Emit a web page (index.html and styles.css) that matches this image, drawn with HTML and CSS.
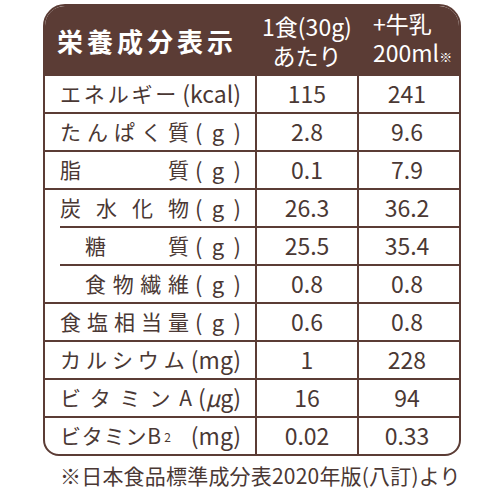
FILE: index.html
```html
<!DOCTYPE html>
<html lang="ja">
<head>
    <meta charset="utf-8">
    <title>栄養成分表示</title>
    <link rel="stylesheet" href="styles.css">
</head>
<body>
    <div class="hyou">
        <div class="satir baslik">
            <div class="ad-hucre baslik-ad">栄養成分表示</div>
            <div class="sayi"><span class="st">1食(30g)</span><span class="st">あたり</span></div>
            <div class="sayi"><span class="st">+牛乳</span><span class="st">200ml<span class="kucuk">※</span></span></div>
        </div>

        <div class="satir">
            <div class="ad-hucre"><span class="ad"><i>エ</i><i>ネ</i><i>ル</i><i>ギ</i><i>ー</i></span><span class="birim">(kcal)</span></div>
            <div class="sayi">115</div>
            <div class="sayi">241</div>
        </div>
        <div class="satir">
            <div class="ad-hucre"><span class="ad"><i>た</i><i>ん</i><i>ぱ</i><i>く</i><i>質</i></span><span class="birim g"><i>(</i><i>g</i><i>)</i></span></div>
            <div class="sayi">2.8</div>
            <div class="sayi">9.6</div>
        </div>
        <div class="satir">
            <div class="ad-hucre"><span class="ad"><i>脂</i><i>質</i></span><span class="birim g"><i>(</i><i>g</i><i>)</i></span></div>
            <div class="sayi">0.1</div>
            <div class="sayi">7.9</div>
        </div>
        <div class="satir">
            <div class="ad-hucre"><span class="ad"><i>炭</i><i>水</i><i>化</i><i>物</i></span><span class="birim g"><i>(</i><i>g</i><i>)</i></span></div>
            <div class="sayi">26.3</div>
            <div class="sayi">36.2</div>
        </div>
        <div class="satir alt">
            <div class="ad-hucre"><span class="ad"><i>糖</i><i>質</i></span><span class="birim g"><i>(</i><i>g</i><i>)</i></span></div>
            <div class="sayi">25.5</div>
            <div class="sayi">35.4</div>
        </div>
        <div class="satir alt">
            <div class="ad-hucre"><span class="ad"><i>食</i><i>物</i><i>繊</i><i>維</i></span><span class="birim g"><i>(</i><i>g</i><i>)</i></span></div>
            <div class="sayi">0.8</div>
            <div class="sayi">0.8</div>
        </div>
        <div class="satir">
            <div class="ad-hucre"><span class="ad"><i>食</i><i>塩</i><i>相</i><i>当</i><i>量</i></span><span class="birim g"><i>(</i><i>g</i><i>)</i></span></div>
            <div class="sayi">0.6</div>
            <div class="sayi">0.8</div>
        </div>
        <div class="satir">
            <div class="ad-hucre"><span class="ad"><i>カ</i><i>ル</i><i>シ</i><i>ウ</i><i>ム</i></span><span class="birim">(mg)</span></div>
            <div class="sayi">1</div>
            <div class="sayi">228</div>
        </div>
        <div class="satir">
            <div class="ad-hucre"><span class="ad"><i>ビ</i><i>タ</i><i>ミ</i><i>ン</i><i>A</i></span><span class="birim">(<em>μ</em>g)</span></div>
            <div class="sayi">16</div>
            <div class="sayi">94</div>
        </div>
        <div class="satir">
            <div class="ad-hucre"><span class="ad"><i>ビ</i><i>タ</i><i>ミ</i><i>ン</i><i>B<small>2</small></i></span><span class="birim b2">(mg)</span></div>
            <div class="sayi">0.02</div>
            <div class="sayi">0.33</div>
        </div>
    </div>
    <p class="not">※日本食品標準成分表2020年版(八訂)より</p>
</body>
</html>
```

FILE: styles.css
```css
body {margin: 0; background-color: #fff; color: #4a3834; font-family: "Noto Sans CJK JP", "Noto Sans", sans-serif;}

.hyou {
    margin: 4px 0 0 43px;
    width: 414px;
    border: 2px solid #5b3c35;
    border-radius: 22px 22px 16px 16px;
    overflow: hidden;}
.satir {
    box-sizing: border-box;
    display: flex;
    height: 38px;
    border-top: 2px solid #5b3c35;
    font-size: 21px;
    line-height: 35px;}
.satir > div {box-sizing: border-box;}
.ad-hucre {
    width: 210px;
    display: flex;
    padding: 0 14px 0 15px;}
.sayi {
    width: 102px;
    border-left: 2px solid #5b3c35;
    text-align: center;
    font-size: 23px;}
.sayi:last-child {width: 98px;}

.baslik {
    height: 68px;
    border-top: none;
    background-color: #5b3c35;
    color: #fff;}
.baslik .sayi {
    border-left-color: #5b3c35;
    display: flex;
    flex-direction: column;
    justify-content: center;
    gap: 1px;
    font-size: 23px;
    line-height: 28px;
    white-space: nowrap;}
.baslik .sayi:first-of-type {padding-right: 4px;}
.baslik .sayi:last-child {text-align: left; padding-left: 14px;}
.baslik-ad {font-size: 26px; font-weight: bold; letter-spacing: 4px; align-items: center; padding-left: 12px;}
.kucuk {font-size: 13px;}

.ad {flex: 1; display: flex; justify-content: space-between;}
.ad i, .birim i {font-style: normal;}
.ad small {font-size: 12px; vertical-align: 2px; margin-left: 3px;}
.birim {margin-left: 6px; font-size: 23px;}
.birim em {font-style: italic;}
.birim.b2 {margin-left: 20px;}
.birim.g {display: flex; justify-content: space-between; width: 46px; font-size: 22px;}

/* alt satırlar: sol hücre çizgisi içeriden başlar */
.alt {border-top: none; position: relative;}
.alt::before {
    content: "";
    position: absolute;
    left: 15px;
    right: 0;
    top: 0;
    border-top: 2px solid #5b3c35;}
.alt .ad-hucre {padding-top: 2px; padding-left: 40px;}
.alt .sayi {padding-top: 2px;}

.not {margin: 4px 0 0 60px; font-size: 21px; letter-spacing: 0.2px;}
```
